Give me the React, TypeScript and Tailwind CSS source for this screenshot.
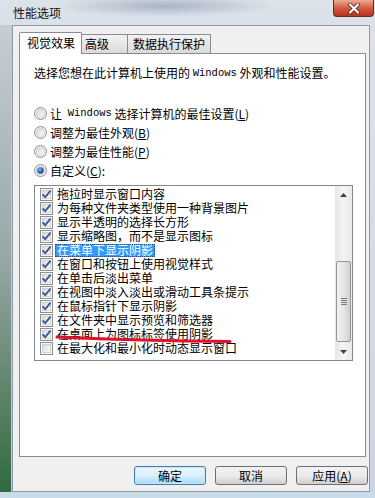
import React from "react";

function Radio({ checked }: { checked?: boolean }) {
  return (
    <svg width="13" height="13" viewBox="0 0 13 13" className="shrink-0">
      <defs>
        <linearGradient id="rg" x1="0" y1="0" x2="1" y2="1">
          <stop offset="0" stopColor="#d4d7dc" />
          <stop offset="1" stopColor="#fbfbfb" />
        </linearGradient>
        <radialGradient id="rdot" cx="0.4" cy="0.35" r="0.7">
          <stop offset="0" stopColor="#8cc0f0" />
          <stop offset="0.5" stopColor="#2f6fc0" />
          <stop offset="1" stopColor="#153f7a" />
        </radialGradient>
      </defs>
      <circle cx="6.5" cy="6.5" r="6" fill="#f4f4f4" stroke="#8f8f8f" />
      <circle cx="6.5" cy="6.5" r="4.3" fill="url(#rg)" stroke="#c5c8cc" strokeWidth="0.8" />
      {checked && <circle cx="6.5" cy="6.5" r="3.2" fill="url(#rdot)" />}
    </svg>
  );
}

function Check({ checked }: { checked?: boolean }) {
  return (
    <svg width="13" height="13" viewBox="0 0 13 13" className="shrink-0">
      <defs>
        <linearGradient id="cg" x1="0" y1="0" x2="1" y2="1">
          <stop offset="0" stopColor="#d6dae0" />
          <stop offset="1" stopColor="#fcfcfd" />
        </linearGradient>
      </defs>
      <rect x="0.5" y="0.5" width="12" height="12" fill="#f6f6f6" stroke="#8e8f8f" />
      <rect x="2.5" y="2.5" width="8" height="8" fill="url(#cg)" stroke="#c6c9ce" strokeWidth="0.8" />
      {checked && (
        <path d="M2.6 6.4 L5.2 9.2 L10.6 2.6" fill="none" stroke="#3d5a98" strokeWidth="1.9" strokeLinejoin="round" />
      )}
    </svg>
  );
}

const items: { t: string; c: boolean; sel?: boolean }[] = [
  { t: "拖拉时显示窗口内容", c: true },
  { t: "为每种文件夹类型使用一种背景图片", c: true },
  { t: "显示半透明的选择长方形", c: true },
  { t: "显示缩略图，而不是显示图标", c: true },
  { t: "在菜单下显示阴影", c: true, sel: true },
  { t: "在窗口和按钮上使用视觉样式", c: true },
  { t: "在单击后淡出菜单", c: true },
  { t: "在视图中淡入淡出或滑动工具条提示", c: true },
  { t: "在鼠标指针下显示阴影", c: true },
  { t: "在文件夹中显示预览和筛选器", c: true },
  { t: "在桌面上为图标标签使用阴影", c: true },
  { t: "在最大化和最小化时动态显示窗口", c: false },
];

function Win({ children }: { children: React.ReactNode }) {
  return <span className="font-['Liberation_Mono',monospace] text-[10.5px] leading-none">{children}</span>;
}

export default function App() {
  return (
    <div className="w-[375px] h-[498px] flex flex-col overflow-hidden relative bg-linear-to-b from-[#dbe2ea] to-[#cbd6e2] text-black font-['Noto_Sans_CJK_SC','Liberation_Sans',sans-serif]">
      {/* Title bar */}
      <div className="h-[25px] shrink-0 flex justify-between bg-[radial-gradient(ellipse_110px_11px_at_165px_6px,#aab5c3,transparent)]">
        <div className="pl-[13px] pt-[5px] text-[12px] leading-[16px] text-[#111]">性能选项</div>
        <div className="mr-[1px] w-[41px] h-[17px] rounded-b-[4px] border border-t-0 border-[#6b2a22] bg-linear-to-b from-[#e9aa98] via-[#d25a40] to-[#b8301f] flex items-center justify-center">
          <svg width="14" height="11" viewBox="0 0 14 11">
            <path d="M3 1.5 L11 9.5 M11 1.5 L3 9.5" stroke="#4a1a14" strokeWidth="3.6" strokeLinecap="round" />
            <path d="M3 1.5 L11 9.5 M11 1.5 L3 9.5" stroke="#ffffff" strokeWidth="2.2" strokeLinecap="round" />
          </svg>
        </div>
      </div>

      {/* Middle */}
      <div className="flex h-[467px] shrink-0">
        <div className="w-[12px] bg-linear-to-b from-[#c6ced6] via-[#98a7a6] to-[#2f6a3f] border-r border-[#a7d6cf]" />
        <div className="flex-1 bg-[#f0f0f0] border border-[#8d9aab] pl-[6px] pt-[6px] flex flex-col">
          {/* Tabs */}
          <div className="h-[21px] shrink-0 flex items-end text-[12px] leading-[16px] relative z-10">
            <div className="w-[63px] h-[22px] -mb-px bg-white border border-b-0 border-[#898c95] rounded-t-[2px] pl-[7px] pt-[2px]">视觉效果</div>
            <div className="w-[46px] h-[19px] bg-linear-to-b from-[#f3f3f3] to-[#dadada] border border-l-0 border-b-0 border-[#898c95] pl-[3px] pt-[1px]">高级</div>
            <div className="w-[83px] h-[19px] bg-linear-to-b from-[#f3f3f3] to-[#dadada] border border-l-0 border-b-0 border-[#898c95] pl-[5px] pt-[1px]">数据执行保护</div>
          </div>

          {/* Panel */}
          <div className="w-[347px] h-[404px] shrink-0 bg-white border border-[#898c95] pl-[14px] pt-[11px] flex flex-col">
            <div className="h-[16px] shrink-0 flex items-center text-[12px] whitespace-nowrap">
              <span>选择您想在此计算机上使用的&nbsp;</span>
              <Win>Windows</Win>
              <span>&nbsp;外观和性能设置。</span>
            </div>

            <div className="mt-[23px] shrink-0 flex flex-col text-[12px]">
              <div className="h-[19px] flex items-center gap-[3px] whitespace-nowrap">
                <Radio />
                <span>让&nbsp;</span>
                <Win>Windows</Win>
                <span className="-ml-[3px]">&nbsp;选择计算机的最佳设置(<u>L</u>)</span>
              </div>
              <div className="h-[19px] flex items-center gap-[3px]">
                <Radio />
                <span>
                  调整为最佳外观(<u>B</u>)
                </span>
              </div>
              <div className="h-[19px] flex items-center gap-[3px]">
                <Radio />
                <span>
                  调整为最佳性能(<u>P</u>)
                </span>
              </div>
              <div className="h-[19px] flex items-center gap-[3px]">
                <Radio checked />
                <span>
                  自定义(<u>C</u>):
                </span>
              </div>
            </div>

            {/* List box */}
            <div className="mt-[5px] w-[319px] h-[176px] shrink-0 border border-[#828790] bg-white flex">
              <div className="flex-1 pt-[1px] pl-[5px] flex flex-col">
                {items.map((it) => (
                  <div key={it.t} className="h-[14px] shrink-0 flex items-center gap-[2px] text-[12px] whitespace-nowrap">
                    <Check checked={it.c} />
                    <span
                      className={
                        it.sel
                          ? "px-[2px] h-[13px] leading-[12px] bg-[#3399ff] text-white outline outline-1 outline-dotted outline-[#1a4f8a] -outline-offset-1"
                          : "px-[2px] h-[13px] leading-[12px]"
                      }
                    >
                      {it.t}
                    </span>
                  </div>
                ))}
              </div>
              {/* Scrollbar */}
              <div className="w-[17px] flex flex-col bg-linear-to-r from-[#e6e6e6] via-[#f4f4f4] to-[#e9e9e9]">
                <div className="h-[17px] flex items-center justify-center">
                  <svg width="7" height="4" viewBox="0 0 7 4">
                    <path d="M0 4 L3.5 0 L7 4 Z" fill="#404040" />
                  </svg>
                </div>
                <div className="flex-1 flex flex-col justify-end items-center pb-[1px]">
                  <div className="w-[15px] h-[81px] rounded-[2px] border border-[#959595] bg-linear-to-r from-[#f1f1f1] via-[#e6e6e6] to-[#cfcfcf] flex flex-col items-center justify-center gap-[1px]">
                    <div className="w-[6px] h-px bg-[#7a7a7a]" />
                    <div className="w-[6px] h-px bg-[#7a7a7a]" />
                    <div className="w-[6px] h-px bg-[#7a7a7a]" />
                    <div className="w-[6px] h-px bg-[#7a7a7a]" />
                  </div>
                </div>
                <div className="h-[17px] flex items-center justify-center">
                  <svg width="7" height="4" viewBox="0 0 7 4">
                    <path d="M0 0 L3.5 4 L7 0 Z" fill="#404040" />
                  </svg>
                </div>
              </div>
            </div>
          </div>

          {/* Buttons */}
          <div className="mt-[9px] flex justify-end gap-[9px] pr-[1px] text-[12px] leading-[16px]">
            <button className="w-[72px] h-[19px] rounded-[3px] border border-[#3c7fb1] bg-linear-to-b from-[#eaf6fd] via-[#d9f0fc] to-[#a7d9f5] shadow-[inset_0_0_0_1px_#c6e8fa] flex items-center justify-center">
              确定
            </button>
            <button className="w-[72px] h-[19px] rounded-[3px] border border-[#707070] bg-linear-to-b from-[#f2f2f2] via-[#ebebeb] to-[#cfcfcf] flex items-center justify-center">
              取消
            </button>
            <button className="w-[72px] h-[19px] rounded-[3px] border border-[#707070] bg-linear-to-b from-[#f2f2f2] via-[#ebebeb] to-[#cfcfcf] flex items-center justify-center">
              应用(<u>A</u>)
            </button>
          </div>
        </div>
        <div className="w-[5px]" />
      </div>
      <div className="h-[6px] shrink-0 bg-[#c7dbe8]" />

      {/* Red annotation stroke */}
      <svg className="absolute left-0 top-0 pointer-events-none" width="375" height="498">
        <path d="M57 337 C 100 339, 160 341, 230 341.5" fill="none" stroke="#e3102a" strokeWidth="3" strokeLinecap="round" />
      </svg>
    </div>
  );
}
